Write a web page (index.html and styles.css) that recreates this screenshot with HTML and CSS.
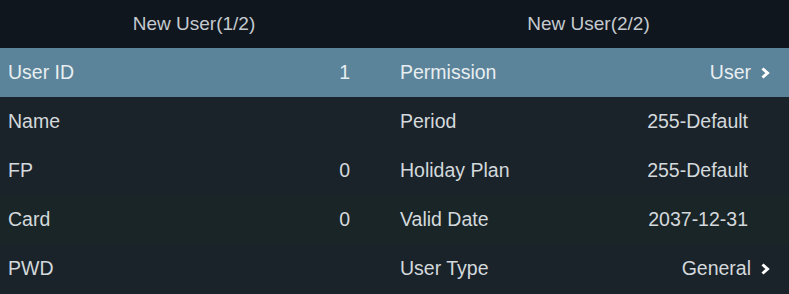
FILE: index.html
```html
<!DOCTYPE html>
<html>
<head>
<link rel="stylesheet" href="styles.css">
</head>
<body>
    <div id="screens">
        <div class="panel left">
            <div class="title">New User(1/2)</div>
            <div class="row active"><span>User ID</span><span class="val">1</span></div>
            <div class="row"><span>Name</span><span class="val"></span></div>
            <div class="row"><span>FP</span><span class="val">0</span></div>
            <div class="row green"><span>Card</span><span class="val">0</span></div>
            <div class="row"><span>PWD</span><span class="val"></span></div>
        </div>
        <div class="panel right">
            <div class="title">New User(2/2)</div>
            <div class="row active"><span>Permission</span><span class="val">User <svg class="chev" viewBox="0 0 10 12"><polyline points="2.5,1.5 7.5,6 2.5,10.5"/></svg></span></div>
            <div class="row"><span>Period</span><span class="val">255-Default</span></div>
            <div class="row"><span>Holiday Plan</span><span class="val">255-Default</span></div>
            <div class="row green"><span>Valid Date</span><span class="val">2037-12-31</span></div>
            <div class="row"><span>User Type</span><span class="val">General <svg class="chev" viewBox="0 0 10 12"><polyline points="2.5,1.5 7.5,6 2.5,10.5"/></svg></span></div>
        </div>
    </div>
</body>
</html>
```

FILE: styles.css
```css
body {
    margin: 0;
    background-color: #1a2329;
    font-family: "Liberation Sans", Arial, sans-serif;
    color: #d3d9dc;
}

#screens {
    display: flex;
    width: 789px;
    height: 294px;
}

.panel {
    display: flex;
    flex-direction: column;
}

.left {
    width: 388px;
}

.right {
    flex: 1;
}

.title {
    height: 48px;
    line-height: 48px;
    background-color: #10161e;
    text-align: center;
    font-size: 19px;
    color: #c4cacf;
}

.row {
    height: 49px;
    display: flex;
    justify-content: space-between;
    align-items: center;
    font-size: 19.5px;
    background-color: #1b232a;
}

.row.green {
    background-color: #1a2527;
}

.row.active {
    background-color: #5b8399;
    color: #e8eef1;
}

.left .row {
    padding: 0 38px 0 8px;
}

.right .row {
    padding: 0 41px 0 12px;
}

.right .row .val {
    display: flex;
    align-items: center;
}

.chev {
    width: 10px;
    height: 12px;
    margin-left: 9px;
    margin-right: -22px;
    fill: none;
    stroke: #ffffff;
    stroke-width: 3;
}
```
